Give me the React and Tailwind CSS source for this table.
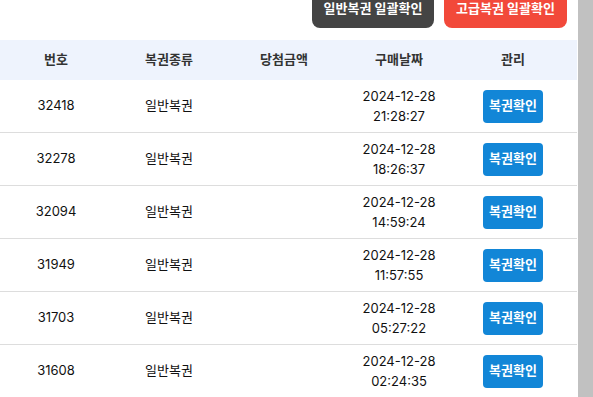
import React from 'react';

const rows = [
    { id: '32418', date: '2024-12-28', time: '21:28:27' },
    { id: '32278', date: '2024-12-28', time: '18:26:37' },
    { id: '32094', date: '2024-12-28', time: '14:59:24' },
    { id: '31949', date: '2024-12-28', time: '11:57:55' },
    { id: '31703', date: '2024-12-28', time: '05:27:22' },
    { id: '31608', date: '2024-12-28', time: '02:24:35' },
];

const cols = 'grid grid-cols-[112px_114px_116px_114px_114px_1fr]';

const App = () => {
    return (
        <div
            className="flex h-[397px] w-[593px] overflow-hidden bg-white text-[#111]"
            style={{ fontFamily: 'Inter, "Noto Sans CJK KR", sans-serif' }}
        >
            <div className="w-[578px] overflow-hidden">
                <div className="-mt-[10px]">
                    <div className="flex justify-end gap-[10px] pr-[11px]">
                        <button className="h-[38px] w-[122px] rounded-[8px] bg-[#444444] text-[13px] font-bold text-white">
                            일반복권 일괄확인
                        </button>
                        <button className="h-[38px] w-[123px] rounded-[8px] bg-[#f2493a] text-[13px] font-bold text-white">
                            고급복권 일괄확인
                        </button>
                    </div>

                    <div className="mt-[12px] w-[577px]">
                        <div className={`${cols} h-[40px] items-center bg-[#eef3fd] text-[13px] font-bold text-[#333]`}>
                            <div className="text-center">번호</div>
                            <div className="text-center">복권종류</div>
                            <div className="text-center">당첨금액</div>
                            <div className="text-center">구매날짜</div>
                            <div className="text-center">관리</div>
                        </div>

                        {rows.map((r) => (
                            <div
                                key={r.id}
                                className={`${cols} h-[53px] items-center border-b border-[#dddddd] text-[13px]`}
                            >
                                <div className="text-center">{r.id}</div>
                                <div className="text-center">일반복권</div>
                                <div className="text-center"></div>
                                <div className="text-center leading-[20px]">
                                    <div>{r.date}</div>
                                    <div>{r.time}</div>
                                </div>
                                <div className="flex justify-center">
                                    <button className="flex h-[33px] w-[60px] items-center justify-center rounded-[4px] bg-[#1286d7] text-[13px] font-bold text-white">
                                        복권확인
                                    </button>
                                </div>
                            </div>
                        ))}
                    </div>
                </div>
            </div>
            <div className="h-full w-[15px] bg-[#c1c1c1]"></div>
        </div>
    );
};

export default App;
